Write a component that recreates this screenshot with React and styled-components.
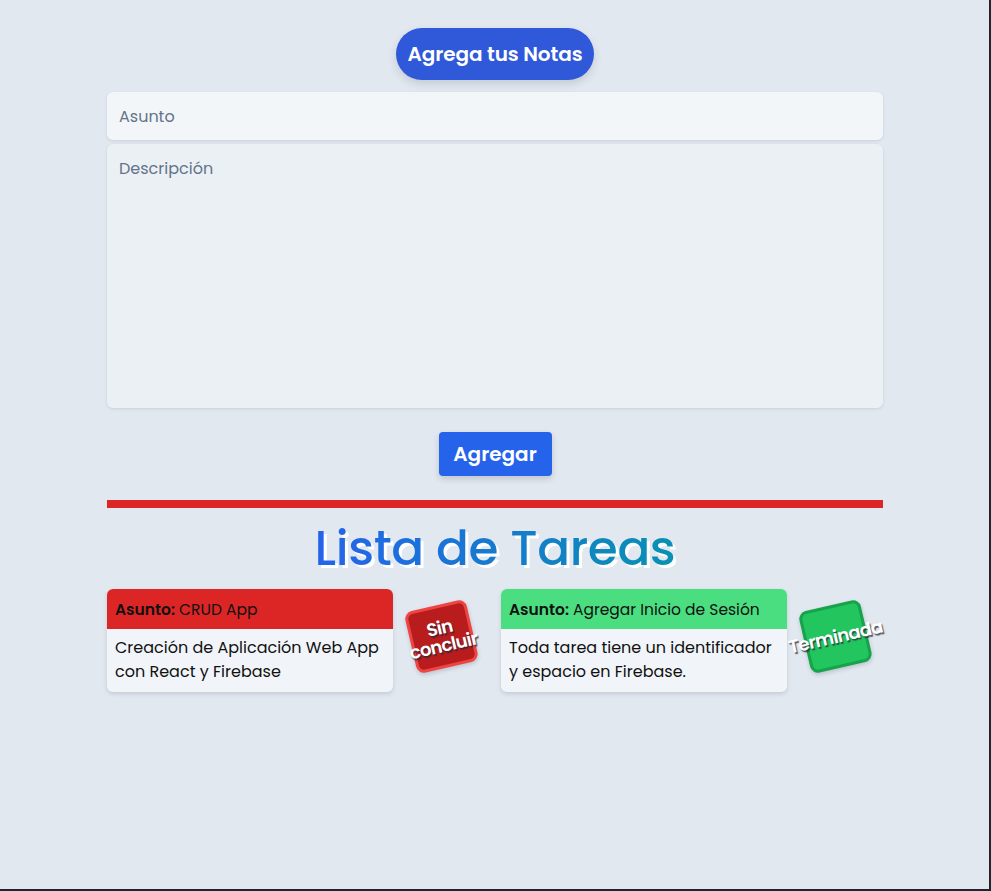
import React from "react";
import styled, { createGlobalStyle } from "styled-components";

const Global = createGlobalStyle`
  html, body { margin: 0; padding: 0; }
  body {
    background: #e2e8f0;
    font-family: "Poppins", "Open Sans", "Noto Sans", sans-serif;
  }
  * { box-sizing: border-box; }
`;

const Frame = styled.div`
  width: 991px;
  height: 891px;
  border-right: 2px solid #1e2530;
  border-bottom: 2px solid #1e2530;
  background: #e2e8f0;
  overflow: hidden;
`;

const Container = styled.main`
  width: 776px;
  margin: 0 0 0 107px;
  padding-top: 28px;
  display: flex;
  flex-direction: column;
`;

const Form = styled.form`
  display: flex;
  flex-direction: column;
  align-items: stretch;
`;

const Pill = styled.h1`
  align-self: center;
  margin: 0 0 12px;
  height: 52px;
  padding: 0 12px;
  border-radius: 26px;
  background: #3059d9;
  color: #fff;
  font-size: 20px;
  font-weight: 600;
  display: flex;
  align-items: center;
  box-shadow: 0 4px 8px rgba(30, 41, 59, 0.15);
  letter-spacing: -0.1px;
`;

const Field = styled.input`
  height: 48px;
  border: none;
  border-radius: 6px;
  background: #f3f6f9;
  padding: 0 12px;
  font: inherit;
  font-size: 16px;
  color: #334155;
  box-shadow: 0 1px 3px rgba(30, 41, 59, 0.12);
  outline: none;
  &::placeholder { color: #64748b; }
`;

const Area = styled.textarea`
  margin-top: 4px;
  height: 264px;
  border: none;
  border-radius: 6px;
  background: #ebf0f5;
  padding: 12px 12px;
  font: inherit;
  font-size: 16px;
  resize: none;
  box-shadow: 0 1px 3px rgba(30, 41, 59, 0.12);
  outline: none;
  &::placeholder { color: #64748b; }
`;

const Submit = styled.button`
  align-self: center;
  margin-top: 24px;
  width: 113px;
  height: 44px;
  border: none;
  border-radius: 4px;
  background: #2563eb;
  color: #fff;
  font: inherit;
  font-size: 20px;
  font-weight: 600;
  box-shadow: 0 3px 6px rgba(30, 41, 59, 0.18);
`;

const Divider = styled.hr`
  margin: 24px 0 0;
  height: 8px;
  border: none;
  background: #dc2626;
`;

const ListTitle = styled.h2`
  margin: 12px 0 12px;
  text-align: center;
  font-size: 48.5px;
  font-weight: 500;
  line-height: 57px;
  letter-spacing: -0.4px;
  span {
    background: linear-gradient(90deg, #2563eb, #0891b2);
    -webkit-background-clip: text;
    background-clip: text;
    color: transparent;
    filter: drop-shadow(3px 3px 0 #ffffff);
  }
`;

const Grid = styled.section`
  display: grid;
  grid-template-columns: 394px 1fr;
`;

const Item = styled.div`
  display: flex;
  align-items: flex-start;
`;

const Card = styled.article`
  width: 286px;
  border-radius: 6px;
  overflow: hidden;
  background: #f1f5f9;
  box-shadow: 0 2px 4px rgba(30, 41, 59, 0.15);
  color: #111;
`;

const CardHead = styled.header`
  height: 40px;
  display: flex;
  align-items: center;
  padding: 0 8px;
  font-size: 15.5px;
  background: ${(p) => (p.$done ? "#4ade80" : "#dc2626")};
  b { font-weight: 600; margin-right: 4px; }
`;

const CardBody = styled.p`
  margin: 0;
  padding: 7px 8px 8px;
  font-size: 16px;
  line-height: 24px;
`;

const StampWrap = styled.div`
  width: 96px;
  height: 94px;
  display: flex;
  align-items: center;
  justify-content: center;
`;

const Stamp = styled.div`
  width: 63px;
  height: 63px;
  border-radius: 8px;
  transform: rotate(-13deg);
  background: ${(p) => (p.$done ? "#22c55e" : "#b91c1c")};
  border: 3px solid ${(p) => (p.$done ? "#16a34a" : "#ef4444")};
  box-shadow: 0 2px 4px rgba(30, 41, 59, 0.2);
  display: flex;
  align-items: center;
  justify-content: center;
  color: #fff;
  font-size: 18px;
  font-weight: 600;
  line-height: 18px;
  text-align: center;
  white-space: nowrap;
  text-shadow: 1px 2px 1px rgba(30, 41, 59, 0.75);
  letter-spacing: -0.6px;
`;

const tasks = [
  {
    subject: "CRUD App",
    body: "Creación de Aplicación Web App con React y Firebase",
    done: false,
  },
  {
    subject: "Agregar Inicio de Sesión",
    body: "Toda tarea tiene un identificador y espacio en Firebase.",
    done: true,
  },
];

export default function App() {
  return (
    <Frame>
      <Global />
      <Container>
        <Form onSubmit={(e) => e.preventDefault()}>
          <Pill>Agrega tus Notas</Pill>
          <Field placeholder="Asunto" />
          <Area placeholder="Descripción" />
          <Submit type="submit">Agregar</Submit>
        </Form>
        <Divider />
        <ListTitle>
          <span>Lista de Tareas</span>
        </ListTitle>
        <Grid>
          {tasks.map((t) => (
            <Item key={t.subject}>
              <Card>
                <CardHead $done={t.done}>
                  <b>Asunto:</b> {t.subject}
                </CardHead>
                <CardBody>{t.body}</CardBody>
              </Card>
              <StampWrap>
                <Stamp $done={t.done}>
                  {t.done ? "Terminada" : (
                    <span>Sin<br />concluir</span>
                  )}
                </Stamp>
              </StampWrap>
            </Item>
          ))}
        </Grid>
      </Container>
    </Frame>
  );
}
